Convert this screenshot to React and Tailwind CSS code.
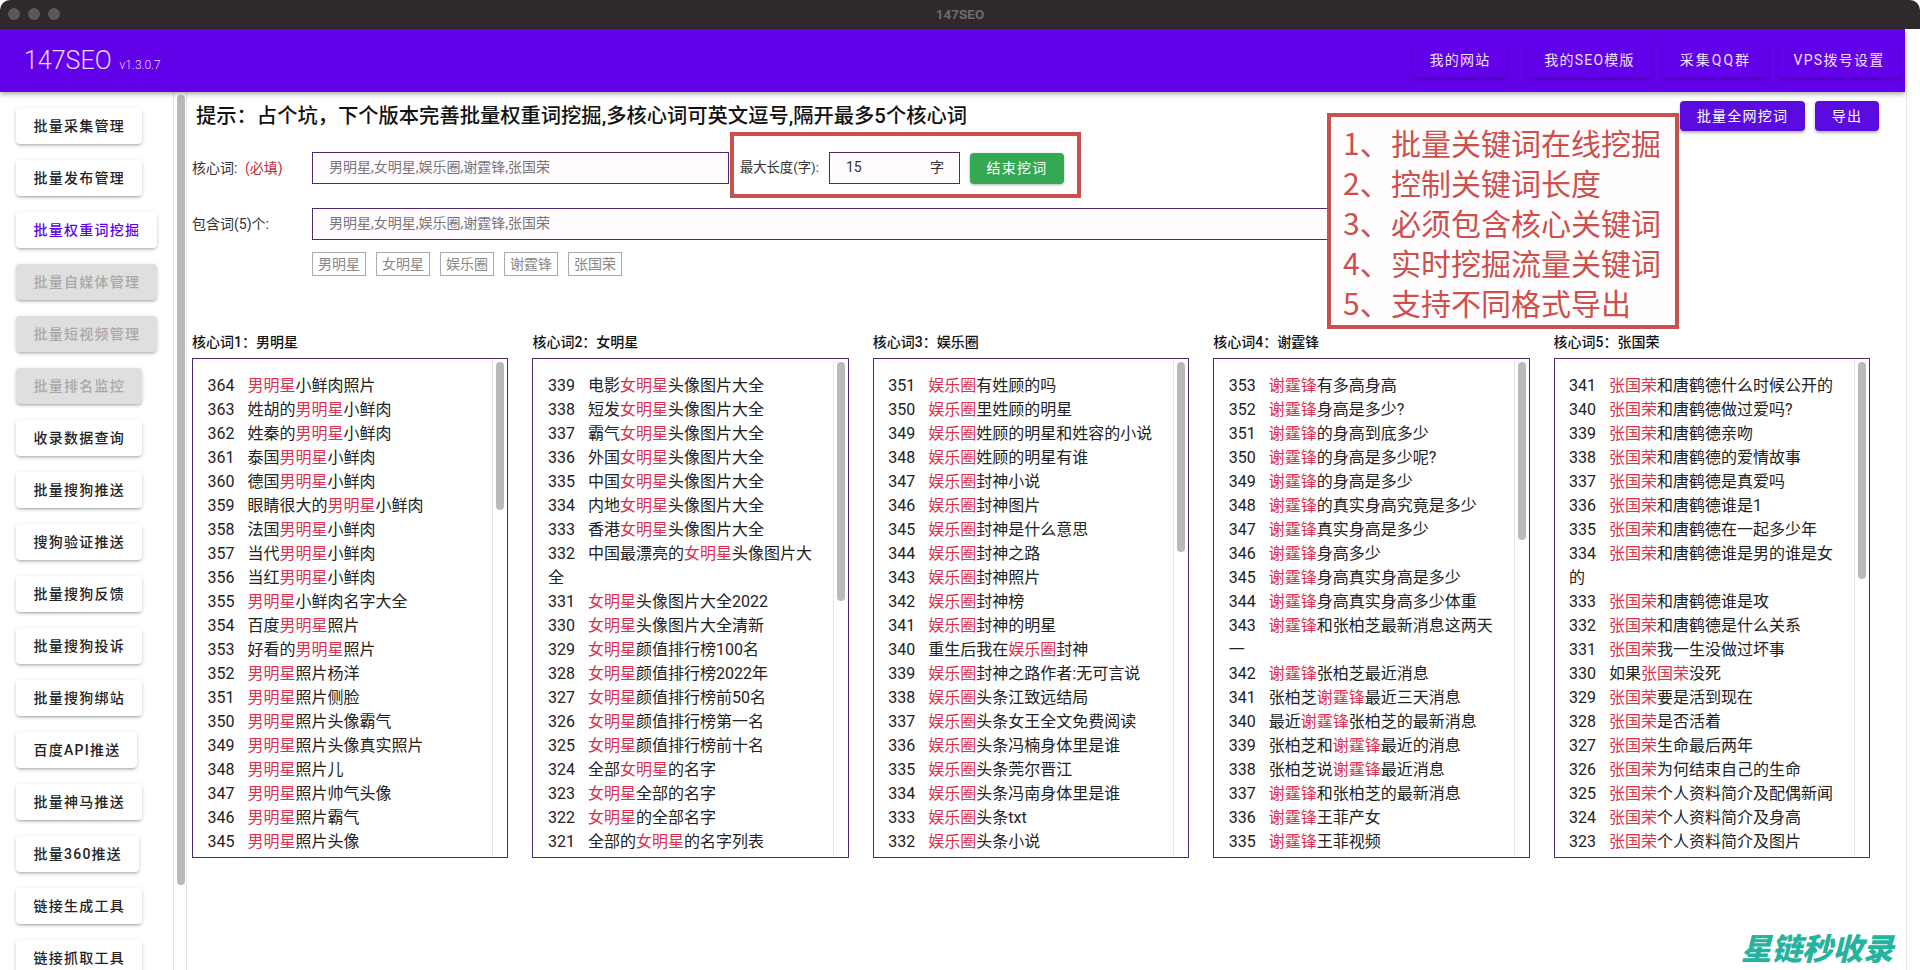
const SANS = 'font-[Roboto,"Noto_Sans_CJK_SC",sans-serif]';

const NAV = [
  { t: "我的网站", w: "w-[92px]", m: "" },
  { t: "我的SEO模版", w: "w-[125px] tracking-[1.5px]", m: "ml-[21px]" },
  { t: "采集QQ群", w: "w-[105px] tracking-[2px]", m: "ml-[11px]" },
  { t: "VPS拨号设置", w: "w-[122px] tracking-[1.5px]", m: "ml-[10px]" },
];

const SIDE = [
  ["批量采集管理"], ["批量发布管理"], ["批量权重词挖掘", "active"], ["批量自媒体管理", "off"], ["批量短视频管理", "off"], ["批量排名监控", "off"],
  ["收录数据查询"], ["批量搜狗推送"], ["搜狗验证推送"], ["批量搜狗反馈"], ["批量搜狗投诉"], ["批量搜狗绑站"],
  ["百度API推送"], ["批量神马推送"], ["批量360推送"], ["链接生成工具"], ["链接抓取工具"],
];

const TAGS = ["男明星", "女明星", "娱乐圈", "谢霆锋", "张国荣"];

const COLS = [
  { word: "男明星", start: 364, thumb: 148, rows: ["男明星小鲜肉照片", "姓胡的男明星小鲜肉", "姓秦的男明星小鲜肉", "泰国男明星小鲜肉", "德国男明星小鲜肉", "眼睛很大的男明星小鲜肉", "法国男明星小鲜肉", "当代男明星小鲜肉", "当红男明星小鲜肉", "男明星小鲜肉名字大全", "百度男明星照片", "好看的男明星照片", "男明星照片杨洋", "男明星照片侧脸", "男明星照片头像霸气", "男明星照片头像真实照片", "男明星照片儿", "男明星照片帅气头像", "男明星照片霸气", "男明星照片头像"] },
  { word: "女明星", start: 339, thumb: 239, rows: ["电影女明星头像图片大全", "短发女明星头像图片大全", "霸气女明星头像图片大全", "外国女明星头像图片大全", "中国女明星头像图片大全", "内地女明星头像图片大全", "香港女明星头像图片大全", "中国最漂亮的女明星头像图片大全", "女明星头像图片大全2022", "女明星头像图片大全清新", "女明星颜值排行榜100名", "女明星颜值排行榜2022年", "女明星颜值排行榜前50名", "女明星颜值排行榜第一名", "女明星颜值排行榜前十名", "全部女明星的名字", "女明星全部的名字", "女明星的全部名字", "全部的女明星的名字列表"] },
  { word: "娱乐圈", start: 351, thumb: 190, rows: ["娱乐圈有姓顾的吗", "娱乐圈里姓顾的明星", "娱乐圈姓顾的明星和姓容的小说", "娱乐圈姓顾的明星有谁", "娱乐圈封神小说", "娱乐圈封神图片", "娱乐圈封神是什么意思", "娱乐圈封神之路", "娱乐圈封神照片", "娱乐圈封神榜", "娱乐圈封神的明星", "重生后我在娱乐圈封神", "娱乐圈封神之路作者:无可言说", "娱乐圈头条江致远结局", "娱乐圈头条女王全文免费阅读", "娱乐圈头条冯楠身体里是谁", "娱乐圈头条莞尔晋江", "娱乐圈头条冯南身体里是谁", "娱乐圈头条txt", "娱乐圈头条小说"] },
  { word: "谢霆锋", start: 353, thumb: 178, rows: ["谢霆锋有多高身高", "谢霆锋身高是多少?", "谢霆锋的身高到底多少", "谢霆锋的身高是多少呢?", "谢霆锋的身高是多少", "谢霆锋的真实身高究竟是多少", "谢霆锋真实身高是多少", "谢霆锋身高多少", "谢霆锋身高真实身高是多少", "谢霆锋身高真实身高多少体重", "谢霆锋和张柏芝最新消息这两天一", "谢霆锋张柏芝最近消息", "张柏芝谢霆锋最近三天消息", "最近谢霆锋张柏芝的最新消息", "张柏芝和谢霆锋最近的消息", "张柏芝说谢霆锋最近消息", "谢霆锋和张柏芝的最新消息", "谢霆锋王菲产女", "谢霆锋王菲视频"] },
  { word: "张国荣", start: 341, thumb: 217, rows: ["张国荣和唐鹤德什么时候公开的", "张国荣和唐鹤德做过爱吗?", "张国荣和唐鹤德亲吻", "张国荣和唐鹤德的爱情故事", "张国荣和唐鹤德是真爱吗", "张国荣和唐鹤德谁是1", "张国荣和唐鹤德在一起多少年", "张国荣和唐鹤德谁是男的谁是女的", "张国荣和唐鹤德谁是攻", "张国荣和唐鹤德是什么关系", "张国荣我一生没做过坏事", "如果张国荣没死", "张国荣要是活到现在", "张国荣是否活着", "张国荣生命最后两年", "张国荣为何结束自己的生命", "张国荣个人资料简介及配偶新闻", "张国荣个人资料简介及身高", "张国荣个人资料简介及图片"] },
];

const NOTES = ["批量关键词在线挖掘", "控制关键词长度", "必须包含核心关键词", "实时挖掘流量关键词", "支持不同格式导出"];

function Row({ n, text, word }) {
  const i = text.indexOf(word);
  return (
    <div className="text-[16px] leading-[24px] text-[#222222]">
      <span className="inline-block w-[40px]">{n}</span>
      {text.slice(0, i)}
      <span className="text-[#d9314f]">{word}</span>
      {text.slice(i + word.length)}
    </div>
  );
}

function Column({ idx, col }) {
  return (
    <div className="w-[316.4px] shrink-0">
      <div className="h-[28px] text-[14px] leading-[24px] font-medium text-[#111111]">
        核心词{idx + 1}：{col.word}
      </div>
      <div className="flex h-[500px] border-[1.5px] border-[#4d2a70] overflow-hidden">
        <div className="flex-1 min-w-0 pl-[14.5px] pr-[16px] pt-[15px]">
          {col.rows.map((t, i) => (
            <Row key={i} n={col.start - i} text={t} word={col.word} />
          ))}
        </div>
        <div className="w-[15px] shrink-0 border-l border-[#e6e6e6] pt-[3px] pl-[3px]">
          <div className="w-[8px] rounded bg-[#b9bbb9]" style={{ height: col.thumb }} />
        </div>
      </div>
    </div>
  );
}

export default function App() {
  return (
    <div className={`relative flex flex-col w-[1920px] h-[970px] overflow-hidden bg-white ${SANS}`}>
      {/* title bar */}
      <div className="relative flex items-center justify-center h-[29px] shrink-0 bg-[#2f292b] rounded-t-[10px]">
        <div className="absolute left-[8px] top-[8px] flex gap-[8px]">
          <span className="w-[12px] h-[12px] rounded-full bg-[#5d5759]" />
          <span className="w-[12px] h-[12px] rounded-full bg-[#5d5759]" />
          <span className="w-[12px] h-[12px] rounded-full bg-[#5d5759]" />
        </div>
        <span className="text-[13.5px] font-bold text-[#6f6a6c]">147SEO</span>
      </div>

      {/* app bar */}
      <header className="relative z-10 flex items-center justify-between w-[1905px] h-[63px] shrink-0 bg-[#6200ea] pl-[24px] pr-[5px] shadow-[0_2px_5px_rgba(0,0,0,0.35)]">
        <div className="flex items-baseline gap-[8px] text-[#e8dcfb]">
          <span className="text-[25px] font-light">147SEO</span>
          <span className="text-[12px] font-light">v1.3.0.7</span>
        </div>
        <nav className="flex -mt-[1px]">
          {NAV.map(({ t, w, m }) => (
            <button key={t} className={`h-[35px] ${w} ${m} rounded text-[14px] tracking-[1.25px] text-[#ece2fc] bg-[#6200ea] shadow-[0_2px_3px_rgba(40,0,110,0.35)]`}>
              {t}
            </button>
          ))}
        </nav>
      </header>

      <div className="flex flex-1 min-h-0">
        {/* sidebar */}
        <aside className="w-[173px] shrink-0 flex flex-col items-start gap-[16px] pl-[16px] pt-[16px] overflow-hidden">
          {SIDE.map(([t, s]) => (
            <button
              key={t}
              className={
                "h-[36px] shrink-0 pl-[17.5px] pr-[16.5px] rounded text-[14px] font-medium tracking-[1.25px] shadow-[0_2px_3px_-1px_rgba(0,0,0,0.3),0_1px_5px_rgba(0,0,0,0.12)] " +
                (s === "active"
                  ? "bg-white text-[#6200ea]"
                  : s === "off"
                  ? "bg-[#dfdfdf] text-[#a8a8a8]"
                  : "bg-white text-[#222222]")
              }
            >
              {t}
            </button>
          ))}
        </aside>

        {/* sidebar scroller */}
        <div className="w-[14px] shrink-0 border-x border-[#e4e4e4] pt-[3px] pl-[2.5px]">
          <div className="w-[8px] h-[790px] rounded bg-[#b9b9b9]" />
        </div>

        {/* main */}
        <main className="relative w-[719px] grow pl-[5px]">
          <div className="flex items-start justify-between h-[60px] pr-[27px]">
            <h1 className="pl-[4px] pt-[10px] text-[20.3px] leading-[28px] font-medium text-[#111111] whitespace-nowrap">
              提示：占个坑，下个版本完善批量权重词挖掘,多核心词可英文逗号,隔开最多5个核心词
            </h1>
            <div className="flex gap-[10px] pt-[9px] text-white">
              <button className="h-[30px] w-[125px] rounded bg-[#5a0ce0] text-[14px] tracking-[1.25px] shadow-[0_2px_3px_rgba(0,0,0,0.3)]">批量全网挖词</button>
              <button className="h-[30px] w-[64px] rounded bg-[#5a0ce0] text-[14px] tracking-[1.25px] shadow-[0_2px_3px_rgba(0,0,0,0.3)]">导出</button>
            </div>
          </div>

          <div className="flex items-center h-[32px] text-[14px] text-[#333333]">
            <div className="w-[120px] shrink-0">
              核心词: <span className="ml-[4px] text-[#c62f35]">(必填)</span>
            </div>
            <input
              readOnly
              placeholder="男明星,女明星,娱乐圈,谢霆锋,张国荣"
              className="w-[416.6px] h-[32px] border border-[#4d2a70] bg-[#fffbff] pl-[16px] pb-[2px] outline-none placeholder:text-[#777777]"
            />
            <div className="ml-[11.4px] w-[89px] shrink-0 text-[13.3px]">最大长度(字):</div>
            <div className="flex items-center justify-between w-[131px] h-[32px] border border-[#4d2a70] bg-[#fffbff] pl-[16px] pr-[15px] pb-[2px] text-[#333333]">
              <span>15</span>
              <span>字</span>
            </div>
            <button className="ml-[10px] w-[94px] h-[31px] rounded bg-[#34a853] text-white text-[14px] tracking-[1.25px] shadow-[0_1px_3px_rgba(0,0,0,0.3)]">结束挖词</button>
          </div>

          <div className="flex items-center h-[32px] mt-[24px] text-[14px] text-[#333333]">
            <div className="w-[120px] shrink-0">包含词(5)个:</div>
            <input
              readOnly
              placeholder="男明星,女明星,娱乐圈,谢霆锋,张国荣"
              className="w-[1100px] h-[32px] border border-[#4d2a70] bg-[#fffbff] pl-[16px] pb-[2px] outline-none placeholder:text-[#777777]"
            />
          </div>

          <div className="flex gap-[10px] mt-[12px] ml-[120px] h-[24px]">
            {TAGS.map((t) => (
              <span key={t} className="flex items-center justify-center w-[54px] h-[24px] border border-[#b0a8b0] text-[14px] text-[#888888]">
                {t}
              </span>
            ))}
          </div>

          <div className="flex gap-[24px] mt-[54px]">
            {COLS.map((c, i) => (
              <Column key={c.word} idx={i} col={c} />
            ))}
          </div>

          {/* annotation boxes over the page */}
          <div className="absolute left-[543px] top-[40px] w-[351px] h-[66px] border-[4px] border-[#c9504c]" />
          <div className="absolute left-[1140px] top-[21px] w-[352px] h-[216px] border-[4px] border-[#c9504c] bg-[#fffdfd] pl-[12px] pt-[5px]">
            {NOTES.map((t, i) => (
              <div key={t} className="flex h-[40px] items-center text-[30px] leading-[40px] text-[#cf4f4b] font-['Noto_Sans_CJK_SC',sans-serif]">
                <span className="w-[48px] shrink-0 whitespace-nowrap">{i + 1}、</span>
                <span className="whitespace-nowrap">{t}</span>
              </div>
            ))}
          </div>
        </main>

        <div className="w-[14px] shrink-0 border-l border-[#e8e8e8]" />
      </div>

      {/* watermark */}
      <div className="absolute left-[1741px] top-[929px] text-[30.5px] leading-[36px] font-black italic text-[#25b39e] font-['Noto_Sans_CJK_SC',sans-serif] whitespace-nowrap">
        星链秒收录
      </div>
    </div>
  );
}
